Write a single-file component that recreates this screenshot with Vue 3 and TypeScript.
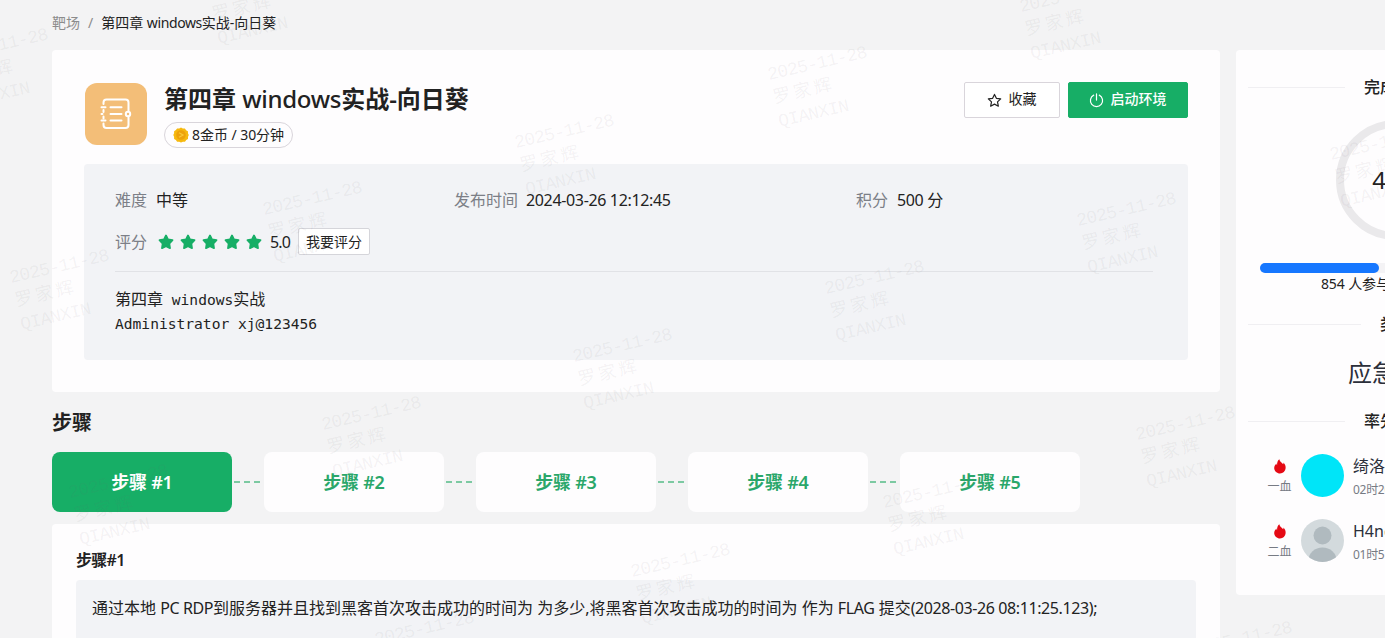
<template>
  <div class="page">
    <div class="main">
      <nav class="crumb">
        <span class="muted">靶场</span>
        <span class="slash">/</span>
        <span>第四章 <i class="lat">windows</i>实战-向日葵</span>
      </nav>

      <!-- header card -->
      <section class="card head-card">
        <div class="head">
          <div class="logo">
            <svg viewBox="0 0 62 62" fill="none" stroke="#fff" stroke-width="2" stroke-linecap="round" stroke-linejoin="round">
              <path d="M18.500 21v-1.500q0-3 3-3h19q3 0 3 3v8M43.500 34.500v7.500q0 3-3 3h-19q-3 0-3-3v-1.500M18.500 27v2M18.500 33.500v2" />
              <path d="M16.500 24.300h4M25.500 24.300h11M16.500 31h1M25.500 31h11M16.500 37.500h4M25.500 37.500h11" />
              <circle cx="43" cy="31" r="2.200" />
            </svg>
          </div>
          <div class="titles">
            <h1>第四章 <i class="lat">windows</i>实战-向日葵</h1>
            <div class="pill">
              <svg class="coin" viewBox="0 0 16 16">
                <path d="M8 .5l1.800 1 2.100 0 1.200 1.700 1.800 1.100.1 2.100L15.800 8 15 9.800l0 2.100-1.800 1.100-1.200 1.700-2.100 0L8 15.600l-1.800-.9-2.100 0-1.200-1.700L1.100 11.900l0-2.100L.3 8l.8-1.700 0-2.100 1.800-1.100L4.100 1.500l2.100 0z" fill="#f6b90f" />
                <circle cx="8" cy="8" r="4.800" fill="#eda20a" />
                <path d="M6 5.800l4 2.200-4 2.200" fill="none" stroke="#f9c936" stroke-width="1.300" />
              </svg>
              <span>8金币 / 30分钟</span>
            </div>
          </div>
          <div class="actions">
            <button class="btn">
              <svg viewBox="0 0 16 16" fill="none" stroke="#222" stroke-width="1.300" stroke-linejoin="round">
                <path d="M8 1.500l2 4.200 4.600.6-3.400 3.200.9 4.600L8 11.900l-4.100 2.200.9-4.600L1.400 6.300 6 5.700z" />
              </svg>
              <span>收藏</span>
            </button>
            <button class="btn primary">
              <svg viewBox="0 0 16 16" fill="none" stroke="#fff" stroke-width="1.300" stroke-linecap="round">
                <path d="M5 2.300a6.500 6.500 0 1 0 6 0M8 1v6.500" />
              </svg>
              <span>启动环境</span>
            </button>
          </div>
        </div>

        <div class="info">
          <div class="facts">
            <div v-for="f in facts" :key="f.label" class="fact">
              <label>{{ f.label }}</label><span class="val">{{ f.value }}</span>
            </div>
          </div>
          <div class="rate">
            <label>评分</label>
            <div class="stars">
              <svg v-for="n in 5" :key="n" viewBox="0 0 16 16">
                <path d="M8 1.500l2 4 4.500.7-3.200 3.300.7 4.600L8 12.200l-4 1.900.7-4.600L1.500 6.200 6 5.500z" fill="#17ae66" stroke="#17ae66" stroke-width="1.800" stroke-linejoin="round" />
              </svg>
            </div>
            <span class="score">5.0</span>
            <button class="rate-btn"><span>我要评分</span></button>
          </div>
          <div class="desc">
            <p>第四章<code> windows</code>实战</p>
            <p><code>Administrator xj@123456</code></p>
          </div>
        </div>
      </section>

      <h2>步骤</h2>
      <div class="steps">
        <template v-for="n in 5" :key="n">
          <span v-if="n > 1" class="dash"></span>
          <div class="step" :class="{ active: n === current }">步骤 #{{ n }}</div>
        </template>
      </div>

      <section class="card step-card">
        <h3>步骤#{{ current }}</h3>
        <div class="question">
          通过本地 <i class="lat">PC RDP</i>到服务器并且找到黑客首次攻击成功的时间为 为多少,将黑客首次攻击成功的时间为 作为 <i class="lat">FLAG</i> 提交<i class="lat">(2028-03-26 08:11:25.123);</i>
        </div>
      </section>
    </div>

    <aside class="card side">
      <div class="divider">完成进度</div>
      <div class="ring">40%</div>
      <div class="progress"><div class="bar" :style="{ width: percent + '%' }"></div></div>
      <div class="joined">854 人参与 / 375 人完成</div>
      <div class="divider">类型</div>
      <div class="kind">应急响应</div>
      <div class="divider">率先完成</div>
      <div v-for="b in bloods" :key="b.rank" class="blood">
        <div class="rank">
          <svg viewBox="0 0 14 16">
            <path d="M6.300.3C6.500 2.600 9 3.800 10.300 5.700c.5-.5.500-1.200.3-1.900C12.300 5.400 13.200 7.400 13 9.700 12.800 13 10.200 15.500 7 15.500S1 13 .8 9.900C.7 7.800 2 6 3.200 4.900c0 .8.200 1.400.7 1.700C3.700 4.200 4.500 1.600 6.300.3z" fill="#e50914" />
          </svg>
          <span>{{ b.rank }}</span>
        </div>
        <svg class="avatar" viewBox="0 0 43 43">
          <clipPath :id="'clip' + b.id"><circle cx="21.500" cy="21.500" r="21.500" /></clipPath>
          <g :clip-path="`url(#clip${b.id})`">
            <rect width="43" height="43" :fill="b.color" />
            <template v-if="b.blank">
              <circle cx="21.500" cy="16.500" r="9" fill="#b0babf" />
              <ellipse cx="21.500" cy="41" rx="14" ry="12.500" fill="#b0babf" />
            </template>
          </g>
        </svg>
        <div class="who">
          <div class="name">{{ b.name }}</div>
          <div class="time">{{ b.time }}</div>
        </div>
      </div>
    </aside>

    <!-- watermark layer -->
    <svg class="marks" width="1385" height="638" aria-hidden="true">
      <g v-for="(m, i) in marks" :key="i" :transform="`translate(${m[0]} ${m[1]}) rotate(-13)`">
        <text x="0" y="0" textLength="102">2025-11-28</text>
        <text x="0" y="24" textLength="60">罗家辉</text>
        <text x="0" y="48" textLength="72">QIANXIN</text>
      </g>
    </svg>
  </div>
</template>

<script setup lang="ts">
import { ref } from 'vue'

interface Fact { label: string; value: string }
interface Blood {
  id: number
  rank: string
  name: string
  time: string
  color: string
  blank: boolean
}

const current = ref(1)
const percent = ref(43.8)

const facts: Fact[] = [
  { label: '难度', value: '中等' },
  { label: '发布时间', value: '2024-03-26 12:12:45' },
  { label: '积分', value: '500 分' }
]

const bloods: Blood[] = [
  { id: 1, rank: '一血', name: '绮洛', time: '02时20分', color: '#00e5f8', blank: false },
  { id: 2, rank: '二血', name: 'H4ng', time: '01时51分', color: '#d3dadd', blank: true }
]

/* baseline start of each date line */
const marks: [number, number][] = [
  [-50, 62], [208, -3], [516, 148], [769, 80], [1021, 12],
  [11, 283], [264, 215], [574, 362], [826, 294], [1078, 226], [1331, 160],
  [70, 498], [323, 430], [632, 577], [884, 508], [1137, 440],
  [376, 645], [1194, 655]
]
</script>

<style>
html, body { margin: 0; overflow: hidden; }
</style>

<style scoped>
.page {
  position: relative;
  display: flex;
  align-items: flex-start;
  gap: 16px;
  width: 1385px;
  height: 638px;
  padding-left: 52px;
  box-sizing: border-box;
  overflow: hidden;
  background: #f3f3f4;
  color: #222;
  font-family: "Noto Sans", "Noto Sans CJK SC", sans-serif;
  font-size: 16px;
}
.page * { box-sizing: border-box; }
.main { flex: none; width: 1168px; }
.card { background: #fefdfe; border-radius: 4px; }
.lat { font-style: normal; letter-spacing: -.4px; }

/* breadcrumb */
.crumb {
  display: flex;
  height: 50px;
  padding-top: 12px;
  font-size: 14px;
  line-height: 22px;
}
.muted, .slash { color: #8c8c8c; }
.slash { margin: 0 8px; }

/* header */
.head-card { height: 342px; padding: 32px 32px 0; }
.head { display: flex; height: 82px; }
.logo {
  width: 62px;
  height: 62px;
  margin: 1px 17px 0 1px;
  border-radius: 12px;
  background: #f3be78;
}
.logo svg { display: block; }
.titles { flex: 1; }
h1 {
  margin: 1px 0 0;
  font-size: 24px;
  font-weight: 600;
  line-height: 32px;
  height: 39px;
}
h1 .lat { font-weight: 500; letter-spacing: -.3px; }
.pill {
  display: inline-flex;
  align-items: center;
  gap: 3px;
  height: 26px;
  padding: 0 8px;
  border: 1px solid #d9d5db;
  border-radius: 13px;
  font-size: 14px;
  line-height: 24px;
  letter-spacing: -.05px;
}
.coin { width: 16px; height: 16px; }
.actions { display: flex; gap: 8px; }
.btn {
  display: flex;
  align-items: center;
  justify-content: center;
  gap: 7px;
  width: 96px;
  height: 36px;
  padding: 0 1px 0 0;
  border: 1px solid #d9d5db;
  border-radius: 2px;
  background: #fff;
  color: #222;
  font: inherit;
  font-size: 14px;
}
.btn svg { width: 15px; height: 15px; }
.btn span { padding-bottom: 2px; line-height: 20px; }
.btn.primary {
  width: 120px;
  border-color: #17ae66;
  background: #17ae66;
  color: #fff;
  font-weight: 500;
}

/* info panel */
.info {
  height: 196px;
  padding: 24px 32px 0 31px;
  border-radius: 4px;
  background: #f2f3f6;
}
.facts {
  display: grid;
  grid-template-columns: 339px 402px 1fr;
  line-height: 24px;
}
label { margin-right: 9px; color: #7c7f87; }
.val { letter-spacing: -.35px; }
.fact:first-child .val { letter-spacing: 0; }
.fact:nth-child(2) label { margin-right: 8px; }
.rate {
  display: flex;
  align-items: center;
  height: 28px;
  margin-top: 16px;
  line-height: 24px;
}
.stars { display: flex; gap: 6px; margin-left: 2px; }
.stars svg { width: 16px; height: 16px; }
.score { width: 28px; margin-left: 8px; letter-spacing: -.8px; }
.rate-btn {
  width: 72px;
  height: 27px;
  margin-top: -1px;
  padding: 0;
  border: 1px solid #d5d5da;
  border-radius: 2px;
  background: #fff;
  color: #222;
  font: inherit;
  font-size: 14px;
  line-height: 24px;
}
.desc {
  margin: 15px 3px 0 0;
  padding-top: 15px;
  border-top: 1px solid #e1e2e6;
}
.desc p { margin: 0; height: 24px; line-height: 25px; }
code { font-family: "DejaVu Sans Mono", monospace; font-size: 14.6px; white-space: pre; }

/* steps */
h2 { margin: 16px 0 0; height: 44px; font-size: 20px; font-weight: 600; line-height: 30px; }
.steps { display: flex; align-items: center; }
.step {
  width: 180px;
  height: 60px;
  border-radius: 8px;
  background: #fefdfe;
  color: #2aa76a;
  font-size: 18px;
  font-weight: 600;
  line-height: 60px;
  text-align: center;
  letter-spacing: -.25px;
}
.step.active { background: #17ae66; color: #fff; }
.dash {
  width: 32px;
  height: 2px;
  background: repeating-linear-gradient(90deg, transparent 0 2px, #7cc9a2 2px 8px, transparent 8px 10px);
}
.step-card { height: 130px; margin-top: 12px; padding: 24px 24px 0; }
h3 { margin: 0; height: 32px; font-size: 16px; font-weight: 600; line-height: 25px; letter-spacing: -.7px; }
.question {
  height: 80px;
  padding: 16px;
  border-radius: 4px;
  background: #f2f3f6;
  line-height: 24px;
  white-space: nowrap;
}

/* right column */
.side {
  flex: none;
  width: 320px;
  height: 545px;
  margin-top: 50px;
  padding: 25px 12px 0;
}
.divider {
  display: flex;
  align-items: center;
  gap: 19px;
  height: 24px;
  font-weight: 500;
  line-height: 24px;
}
.divider::before, .divider::after {
  content: "";
  flex: 1;
  height: 1px;
  background: #f0eff2;
}
.ring {
  width: 120px;
  height: 120px;
  margin: 21px auto 0;
  border: 8px solid #eae9eb;
  border-radius: 50%;
  font-size: 24px;
  line-height: 104px;
  text-align: center;
}
.progress {
  height: 10px;
  margin: 23px 12px 0;
  border-radius: 5px;
  background: #f4f3f5;
}
.bar { height: 100%; border-radius: 5px; background: #1677ff; }
.joined {
  height: 39px;
  font-size: 14px;
  line-height: 22px;
  text-align: center;
  letter-spacing: -.1px;
}
.kind { height: 73px; font-size: 24px; line-height: 74px; text-align: center; color: #2b2f3a; }
.blood {
  display: flex;
  align-items: center;
  height: 43px;
  margin: 22px 0 0 19px;
}
.divider + .blood { margin-top: 21px; }
.rank {
  display: flex;
  flex-direction: column;
  align-items: center;
  width: 25px;
  margin-right: 9px;
  padding-top: 3px;
  color: #777b84;
  font-size: 12px;
  line-height: 18px;
}
.rank svg { width: 14px; height: 15px; margin-bottom: 4px; }
.avatar { flex: none; width: 43px; height: 43px; }
.who { margin-left: 9px; padding-top: 3px; white-space: nowrap; color: #2b2f3a; }
.name { line-height: 26px; }
.time { color: #777b84; font-size: 12px; line-height: 22px; letter-spacing: -.3px; }

/* watermark */
.marks {
  position: absolute;
  left: 0;
  top: 0;
  pointer-events: none;
  fill: rgba(110, 100, 115, .08);
  font-family: "Liberation Mono", "Noto Sans CJK SC", monospace;
  font-size: 18px;
}
</style>
